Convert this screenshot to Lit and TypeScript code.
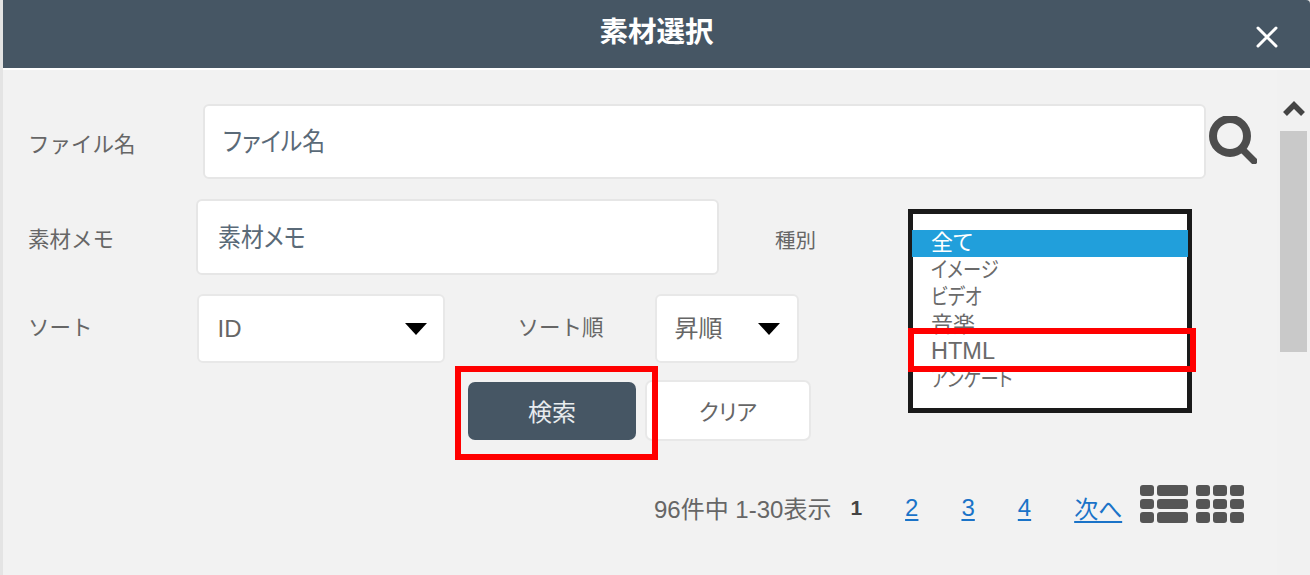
import { LitElement, html, css } from "lit";
import { customElement } from "lit/decorators.js";

const OPTIONS = [
  { text: "全て", narrow: false },
  { text: "イメージ", narrow: true },
  { text: "ビデオ", narrow: true },
  { text: "音楽", narrow: false },
  { text: "HTML", narrow: false },
  { text: "アンケート", narrow: true },
];

@customElement("app-root")
export class AppRoot extends LitElement {
  static styles = css`
    :host {
      display: block;
      width: 1310px;
      height: 575px;
      overflow: hidden;
      position: relative;
      background: #f2f2f2;
      font-family: "Liberation Sans", "Noto Sans CJK JP", sans-serif;
      color: #666;
    }
    .dialog { display: flex; flex-direction: column; height: 100%; padding-left: 3px; box-sizing: border-box; background: #e4e4e4; }
    .head {
      flex: none; display: flex; align-items: center; justify-content: center; position: relative;
      background: #465664; color: #fff; font-size: 28.5px; font-weight: 700; border-top-right-radius: 4px;
      border-bottom: 2px solid #fff; padding-bottom: 10px; box-sizing: content-box; height: 58px;
    }
    .close { position: absolute; left: 1252px; top: 25px; width: 24px; height: 24px; }
    .body { flex: 1; display: flex; background: #f2f2f2; min-height: 0; }
    .main { flex: 1; padding: 34px 0 0 25px; min-width: 0; }
    .row { display: flex; align-items: center; }
    .label { font-size: 21.5px; color: #666; flex: none; line-height: 1; }
    .up { margin-top: 8px; }
    .field {
      background: #fff; border: 2px solid #e6e6e6; border-radius: 6px; box-sizing: border-box; display: flex; align-items: center;
      font-size: 26px; color: #5a6a78; font-feature-settings: "palt";
    }
    .field span { display: inline-block; transform: scaleX(0.88); transform-origin: left center; }
    .f-name { width: 1003px; height: 75px; padding: 0 0 4px 18px; margin-left: 67.5px; }
    .search { margin-left: 3px; margin-bottom: 4px; width: 48px; height: 48px; flex: none; }
    .lower { display: flex; margin-top: 20px; }
    .left { width: 880px; flex: none; }
    .f-memo { width: 523px; height: 76px; padding: 0 0 4px 20px; margin-left: 82px; }
    .kind { margin-left: 56px; font-size: 20.5px; }
    .row-sort { margin-top: 19px; }
    .sel {
      background: #fff; border: 2px solid #e8e8e8; border-radius: 6px; box-sizing: border-box; height: 69px;
      display: flex; align-items: center; justify-content: space-between; font-size: 24px; color: #666;
    }
    .sel-id { width: 248px; margin-left: 104px; padding: 0 16px 0 19px; }
    .sort-order { margin-left: 73px; }
    .sel-order { width: 144px; margin-left: 51px; padding: 0 17px 4px 18px; }
    .tri { width: 0; height: 0; border-left: 11.5px solid transparent; border-right: 11.5px solid transparent; border-top: 12px solid #000; flex: none; }
    .sel-order .tri { margin-top: 4px; }
    .btns { display: flex; align-items: center; margin: 17px 0 0 440px; gap: 9px; }
    .btn { box-sizing: border-box; display: flex; align-items: center; justify-content: center; font-size: 24px; border-radius: 7px; padding-bottom: 1px; }
    .primary { width: 168px; height: 58px; background: #465664; color: #e8ecef; }
    .ghost { width: 166px; height: 61px; background: #fff; border: 2px solid #e8e8e8; color: #666; font-size: 22px; font-feature-settings: "palt"; }
    .listbox {
      margin: 10px 0 0 0; width: 284px; height: 204px; box-sizing: border-box; border: 5px solid #1a1a1a; background: #fff;
      padding-top: 16px; font-size: 22px; color: #6a6a6a; flex: none; font-feature-settings: "palt";
    }
    .opt { height: 27.3px; line-height: 25.3px; padding-left: 18px; white-space: nowrap; }
    .opt.on { background: #219fdb; color: #fff; height: 27px; line-height: 25px; margin-right: -1px; margin-left: -1px; padding-left: 19px; }
    .opt span { display: inline-block; }
    .opt .narrow { transform: scaleX(0.83); transform-origin: left center; }
    .opt.latin { font-size: 23.5px; }
    .pager { display: flex; align-items: center; margin: 49px 0 0 626px; font-size: 24px; color: #666; }
    .pager .cur { font-weight: 700; margin-left: 19px; color: #444; font-size: 21px; }
    .pager a { color: #1a73c8; text-decoration: underline; text-underline-offset: 3px; }
    .p2 { margin-left: 43px; }
    .p3 { margin-left: 43px; }
    .p4 { margin-left: 43px; }
    .next { margin-left: 43px; }
    .views { width: 104px; height: 38px; margin-left: 18px; margin-top: -8px; flex: none; }
    .scroll { width: 33px; flex: none; background: #f1f1f1; display: flex; flex-direction: column; align-items: center; padding-top: 30px; box-sizing: border-box; }
    .arrow { width: 24px; height: 18px; flex: none; }
    .thumb { width: 27px; height: 221px; background: #c9c9c9; margin-top: 13px; }
    .mark { position: absolute; border: solid #f00; box-sizing: border-box; pointer-events: none; }
    .m-btn { left: 455px; top: 366px; width: 203px; height: 94px; border-width: 6px; }
    .m-html { left: 908px; top: 328px; width: 288px; height: 44px; border-width: 6px; }
  `;

  render() {
    return html`
      <div class="dialog">
        <div class="head">
          素材選択
          <svg class="close" viewBox="0 0 24 24"><path d="M3 3L21 21M21 3L3 21" stroke="#fff" stroke-width="3" fill="none" stroke-linecap="round"/></svg>
        </div>
        <div class="body">
          <div class="main">
            <div class="row">
              <div class="label up">ファイル名</div>
              <div class="field f-name"><span>ファイル名</span></div>
              <svg class="search" viewBox="0 0 48 48">
                <circle cx="21" cy="20" r="17" fill="none" stroke="#4d4d4d" stroke-width="8"/>
                <path d="M33 33L45 45" stroke="#4d4d4d" stroke-width="7" stroke-linecap="round"/>
              </svg>
            </div>
            <div class="lower">
              <div class="left">
                <div class="row">
                  <div class="label up">素材メモ</div>
                  <div class="field f-memo"><span>素材メモ</span></div>
                  <div class="label kind up">種別</div>
                </div>
                <div class="row row-sort">
                  <div class="label">ソート</div>
                  <div class="sel sel-id">ID<span class="tri"></span></div>
                  <div class="label sort-order">ソート順</div>
                  <div class="sel sel-order">昇順<span class="tri"></span></div>
                </div>
                <div class="btns">
                  <div class="btn primary">検索</div>
                  <div class="btn ghost">クリア</div>
                </div>
              </div>
              <div class="listbox">
                ${OPTIONS.map(
                  (o, i) => html`<div class="opt ${i === 0 ? "on" : ""} ${o.text === "HTML" ? "latin" : ""}"><span class="${o.narrow ? "narrow" : ""}">${o.text}</span></div>`
                )}
              </div>
            </div>
            <div class="pager">
              <span>96件中 1-30表示</span>
              <span class="cur">1</span>
              <a class="p2">2</a>
              <a class="p3">3</a>
              <a class="p4">4</a>
              <a class="next">次へ</a>
              <svg class="views" viewBox="0 0 104 38" fill="#555">
                <rect x="0" y="0" width="14" height="11" rx="3"/><rect x="17" y="0" width="31" height="11" rx="3"/>
                <rect x="0" y="14" width="14" height="10" rx="3"/><rect x="17" y="14" width="31" height="10" rx="3"/>
                <rect x="0" y="27" width="14" height="11" rx="3"/><rect x="17" y="27" width="31" height="11" rx="3"/>
                <rect x="56" y="0" width="14" height="11" rx="3"/><rect x="73" y="0" width="14" height="11" rx="3"/><rect x="90" y="0" width="14" height="11" rx="3"/>
                <rect x="56" y="14" width="14" height="10" rx="3"/><rect x="73" y="14" width="14" height="10" rx="3"/><rect x="90" y="14" width="14" height="10" rx="3"/>
                <rect x="56" y="27" width="14" height="11" rx="3"/><rect x="73" y="27" width="14" height="11" rx="3"/><rect x="90" y="27" width="14" height="11" rx="3"/>
              </svg>
            </div>
          </div>
          <div class="scroll">
            <svg class="arrow" viewBox="0 0 24 18"><path d="M3 14L12 5L21 14" stroke="#444" stroke-width="5.5" fill="none"/></svg>
            <div class="thumb"></div>
          </div>
        </div>
      </div>
      <div class="mark m-btn"></div>
      <div class="mark m-html"></div>
    `;
  }
}
